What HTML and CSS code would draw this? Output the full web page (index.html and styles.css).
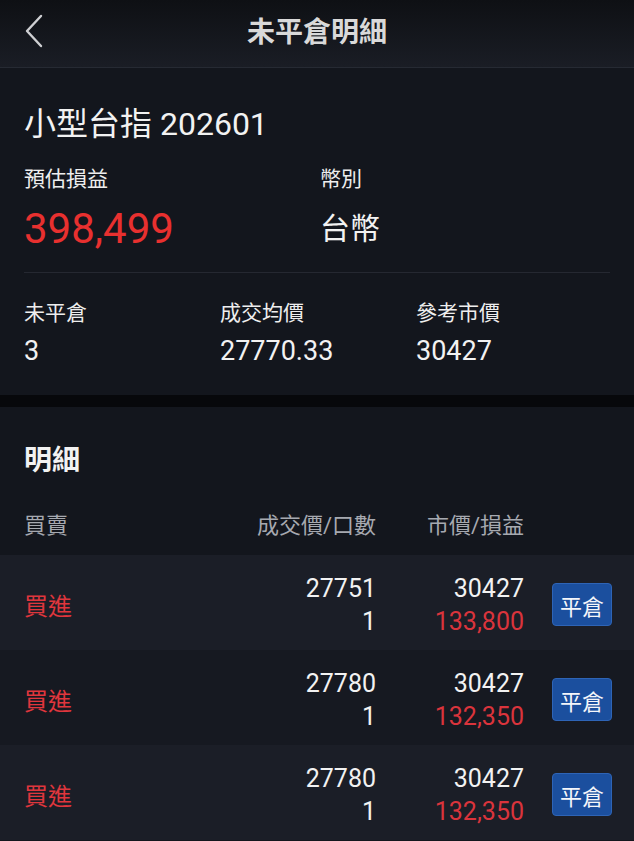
FILE: index.html
```html
<!DOCTYPE html>
<html lang="zh-Hant">
<head>
    <meta charset="UTF-8">
    <meta name="viewport" content="width=device-width, initial-scale=1.0">
    <title>未平倉明細</title>
    <link rel="stylesheet" href="styles.css">
</head>
<body>
    <div class="topbar">
        <button class="back" aria-label="返回">
            <svg width="20" height="34" viewBox="0 0 20 34"><polyline points="17,2 3,17 17,32" fill="none" stroke="#cfd0d3" stroke-width="2.4" stroke-linecap="round" stroke-linejoin="round"/></svg>
        </button>
        <div class="title">未平倉明細</div>
        <div></div>
    </div>

    <div class="summary">
        <div class="product">小型台指 202601</div>
        <div class="pair">
            <div>
                <div class="label">預估損益</div>
                <div class="big red">398,499</div>
            </div>
            <div>
                <div class="label">幣別</div>
                <div class="big currency">台幣</div>
            </div>
        </div>
        <div class="divider"></div>
        <div class="stats">
            <div>
                <div class="label">未平倉</div>
                <div class="value">3</div>
            </div>
            <div>
                <div class="label">成交均價</div>
                <div class="value">27770.33</div>
            </div>
            <div>
                <div class="label">參考市價</div>
                <div class="value">30427</div>
            </div>
        </div>
    </div>

    <div class="detail">
        <div class="detail-title">明細</div>
        <div class="grid head">
            <div>買賣</div>
            <div class="num">成交價/口數</div>
            <div class="num">市價/損益</div>
            <div></div>
        </div>
        <div class="grid row">
            <div class="side">買進</div>
            <div class="num"><div>27751</div><div>1</div></div>
            <div class="num"><div>30427</div><div class="loss">133,800</div></div>
            <div class="act"><button class="close-btn">平倉</button></div>
        </div>
        <div class="grid row">
            <div class="side">買進</div>
            <div class="num"><div>27780</div><div>1</div></div>
            <div class="num"><div>30427</div><div class="loss">132,350</div></div>
            <div class="act"><button class="close-btn">平倉</button></div>
        </div>
        <div class="grid row">
            <div class="side">買進</div>
            <div class="num"><div>27780</div><div>1</div></div>
            <div class="num"><div>30427</div><div class="loss">132,350</div></div>
            <div class="act"><button class="close-btn">平倉</button></div>
        </div>
    </div>
</body>
</html>
```

FILE: styles.css
```css
body {
    margin: 0;
    width: 634px;
    height: 841px;
    overflow: hidden;
    background-color: #13161d;
    color: #f2f2f2;
    font-family: Roboto, "Noto Sans CJK TC", sans-serif;
}

.topbar {
    height: 67px;
    display: grid;
    grid-template-columns: 70px 1fr 70px;
    align-items: center;
    background: linear-gradient(#0e1014, #1a1d25);
    border-bottom: 1px solid #262a33;
}

.back {
    background: none;
    border: none;
    padding: 0 0 0 24px;
    height: 40px;
    display: flex;
    align-items: center;
    margin-top: -6px;
    cursor: pointer;
}

.title {
    text-align: center;
    font-size: 28px;
    font-weight: 700;
    color: #d9d9d9;
    margin-top: -8px;
}

.summary {
    padding: 36px 24px 28px 24px;
    background-color: #13161d;
}

.product {
    font-size: 32px;
    line-height: 40px;
}

.label {
    font-size: 21px;
    line-height: 28px;
    color: #eeeeee;
}

.pair {
    display: grid;
    grid-template-columns: 296px 1fr;
    margin-top: 21px;
}

.big {
    margin-top: 12px;
    font-size: 42px;
    line-height: 48px;
}

.big.currency {
    font-size: 30px;
}

.red {
    color: #e8302f;
}

.divider {
    height: 1px;
    background-color: #252831;
    margin-top: 19px;
}

.stats {
    display: grid;
    grid-template-columns: 196px 196px 1fr;
    margin-top: 26px;
}

.value {
    margin-top: 8px;
    font-size: 27px;
    line-height: 32px;
}

.detail {
    border-top: 12px solid #07080b;
    padding-top: 36px;
    background-color: #13161d;
}

.detail-title {
    padding: 0 24px;
    font-size: 28px;
    font-weight: 700;
    line-height: 36px;
}

.grid {
    display: grid;
    grid-template-columns: 1fr 150px 148px 88px;
    padding: 0 22px 0 24px;
    align-items: center;
}

.head {
    margin-top: 33px;
    padding-bottom: 15px;
    font-size: 22px;
    line-height: 28px;
    color: #a6a9b0;
}

.num {
    text-align: right;
}

.row {
    height: 95px;
    background-color: #1b1e27;
}

.row:nth-child(even) {
    background-color: #161921;
}

.row .num {
    font-size: 25px;
    line-height: 33px;
    margin-top: 4px;
}

.side {
    font-size: 24px;
    color: #e0363d;
    margin-top: 4px;
}

.loss {
    color: #da343c;
}

.act {
    display: flex;
    justify-content: flex-end;
}

.close-btn {
    width: 60px;
    height: 43px;
    margin-top: 4px;
    background-color: #1b4f9e;
    border: 1px solid #2e64b6;
    border-radius: 4px;
    color: #f4f6fa;
    font-family: "Noto Sans CJK TC", sans-serif;
    font-size: 22px;
    padding: 0;
}
```
